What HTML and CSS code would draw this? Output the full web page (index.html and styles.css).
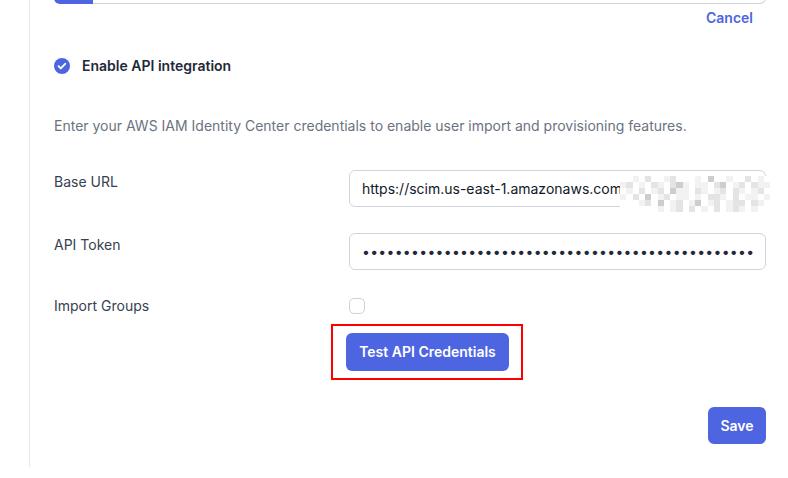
FILE: index.html
```html
<!DOCTYPE html>
<html lang="en">
<head>
<meta charset="utf-8">
<title>AWS IAM Identity Center</title>
<link rel="stylesheet" href="styles.css">
</head>
<body>
<div class="panel">
  <div class="top-group"><span class="addon"></span><span class="top-input"></span></div>
  <div class="cancel-row"><a class="cancel" href="#">Cancel</a></div>
  <div class="enable">
    <span class="check-on"><svg width="16" height="16" viewBox="0 0 16 16"><circle cx="8" cy="8" r="8" fill="#4e65e1"/><path d="M4.6 8.2l2.2 2.2 4.4-4.6" fill="none" stroke="#fff" stroke-width="1.9" stroke-linecap="round" stroke-linejoin="round"/></svg></span>
    <span class="enable-text">Enable API integration</span>
  </div>
  <p class="desc">Enter your AWS IAM Identity Center credentials to enable user import and provisioning features.</p>
  <div class="form-grid">
    <label class="lbl">Base URL</label>
    <div class="field">
      <input class="text-input" type="text" value="https://scim.us-east-1.amazonaws.com">
      <div class="mosaic">
        <i class="m0"></i><i class="m0"></i><i class="m1"></i><i class="m0"></i><i class="m2"></i><i class="m0"></i><i class="m0"></i><i class="m1"></i><i class="m2"></i><i class="m0"></i><i class="m0"></i><i class="m0"></i><i class="m1"></i><i class="m0"></i><i class="m3"></i><i class="m0"></i><i class="m0"></i><i class="m1"></i><i class="m0"></i><i class="m0"></i><i class="m2"></i><i class="m0"></i><i class="m1"></i><i class="m0"></i>
        <i class="m1"></i><i class="m2"></i><i class="m0"></i><i class="m1"></i><i class="m0"></i><i class="m2"></i><i class="m1"></i><i class="m0"></i><i class="m2"></i><i class="m3"></i><i class="m1"></i><i class="m0"></i><i class="m1"></i><i class="m1"></i><i class="m0"></i><i class="m2"></i><i class="m3"></i><i class="m0"></i><i class="m1"></i><i class="m2"></i><i class="m0"></i><i class="m2"></i><i class="m1"></i><i class="m1"></i>
        <i class="m0"></i><i class="m1"></i><i class="m0"></i><i class="m2"></i><i class="m0"></i><i class="m1"></i><i class="m2"></i><i class="m0"></i><i class="m3"></i><i class="m1"></i><i class="m1"></i><i class="m0"></i><i class="m2"></i><i class="m1"></i><i class="m0"></i><i class="m1"></i><i class="m2"></i><i class="m0"></i><i class="m2"></i><i class="m1"></i><i class="m0"></i><i class="m1"></i><i class="m2"></i><i class="m0"></i>
        <i class="m1"></i><i class="m0"></i><i class="m2"></i><i class="m0"></i><i class="m3"></i><i class="m0"></i><i class="m1"></i><i class="m2"></i><i class="m0"></i><i class="m1"></i><i class="m1"></i><i class="m0"></i><i class="m1"></i><i class="m0"></i><i class="m2"></i><i class="m2"></i><i class="m1"></i><i class="m0"></i><i class="m2"></i><i class="m0"></i><i class="m1"></i><i class="m1"></i><i class="m0"></i><i class="m1"></i>
        <i class="m0"></i><i class="m0"></i><i class="m0"></i><i class="m1"></i><i class="m2"></i><i class="m0"></i><i class="m3"></i><i class="m0"></i><i class="m1"></i><i class="m2"></i><i class="m0"></i><i class="m1"></i><i class="m3"></i><i class="m0"></i><i class="m1"></i><i class="m2"></i><i class="m0"></i><i class="m1"></i><i class="m2"></i><i class="m2"></i><i class="m0"></i><i class="m2"></i><i class="m1"></i><i class="m0"></i>
        <i class="m0"></i><i class="m0"></i><i class="m0"></i><i class="m0"></i><i class="m0"></i><i class="m0"></i><i class="m1"></i><i class="m0"></i><i class="m1"></i><i class="m2"></i><i class="m0"></i><i class="m2"></i><i class="m0"></i><i class="m1"></i><i class="m0"></i><i class="m2"></i><i class="m0"></i><i class="m1"></i><i class="m2"></i><i class="m1"></i><i class="m0"></i><i class="m1"></i><i class="m0"></i><i class="m0"></i>
      </div>
    </div>
    <label class="lbl">API Token</label>
    <div class="field">
      <input class="text-input pw" type="password" value="abcdefghijklmnopqrstuvwxyzabcdefghijklmnopqrstuv">
    </div>
    <label class="lbl lbl-check">Import Groups</label>
    <div class="field check-field"><span class="check-off"></span></div>
  </div>
  <div class="test-row">
    <span class="highlight"><button class="btn btn-test" type="button">Test API Credentials</button></span>
  </div>
  <div class="save-row"><button class="btn btn-save" type="button">Save</button></div>
</div>
</body>
</html>
```
FILE: styles.css
```css
* { box-sizing: border-box; }
html, body { margin: 0; padding: 0; background: #fff; }
body {
  font-family: Inter, "Noto Sans", "Liberation Sans", sans-serif;
  font-size: 14px;
  line-height: 20px;
  color: #374151;
  overflow: hidden;
  height: 478px;
}
.panel {
  margin-left: 29px;
  border-left: 1px solid #e5e7eb;
  padding: 0 22px 23px 24px;
}
.top-group {
  display: flex;
  height: 37px;
  margin-top: -33px;
}
.addon {
  width: 39px;
  background: #4e65e1;
  border-radius: 6px 0 0 6px;
}
.top-input {
  flex: 1;
  border: 1px solid #d1d5db;
  border-left: none;
  border-radius: 0 6px 6px 0;
}
.cancel-row {
  display: flex;
  justify-content: flex-end;
  padding-right: 13px;
  margin-top: 4px;
}
.cancel {
  color: #4e65e1;
  font-weight: 600;
  text-decoration: none;
}
.enable {
  display: flex;
  align-items: center;
  gap: 12px;
  margin-top: 28px;
  height: 20px;
}
.check-on { display: flex; width: 16px; height: 16px; }
.enable-text { font-weight: 600; color: #1f2937; }
.desc {
  margin: 40px 0 0;
  color: #6b7280;
}
.form-grid {
  display: grid;
  grid-template-columns: 295px 1fr;
  row-gap: 26px;
  margin-top: 34px;
}
.lbl { padding-top: 2px; color: #374151; }
.lbl-check { padding-top: 0; }
.field { position: relative; }
.text-input {
  display: block;
  width: 100%;
  height: 37px;
  border: 1px solid #d1d5db;
  border-radius: 6px;
  padding: 0 12px;
  font-family: inherit;
  font-size: 14px;
  color: #111827;
  background: #fff;
  outline: none;
}
.pw { letter-spacing: 0.3px; color: #1f2937; }
.mosaic {
  position: absolute;
  left: 271px;
  top: 6px;
  width: 150px;
  height: 36px;
  display: grid;
  grid-template-columns: repeat(24, 1fr);
  grid-template-rows: repeat(6, 6px);
}
.mosaic i { display: block; }
.m0 { background: #fff; }
.m1 { background: #f2f2f2; }
.m2 { background: #e4e4e4; }
.m3 { background: #cdcdcd; }
.check-field { height: 20px; display: flex; align-items: center; }
.check-off {
  width: 16px;
  height: 16px;
  border: 1.5px solid #cfd2d8;
  border-radius: 5px;
}
.test-row {
  margin-top: 8px;
  padding-left: 277px;
  display: flex;
}
.highlight {
  display: flex;
  border: 2px solid #ff0000;
  padding: 7px 12px 7px 13px;
}
.btn {
  border: none;
  border-radius: 6px;
  background: #4e65e1;
  color: #fff;
  font-family: inherit;
  font-size: 14px;
  font-weight: 600;
  line-height: 20px;
  cursor: pointer;
}
.btn-test { width: 163px; height: 38px; padding: 0; }
.save-row {
  display: flex;
  justify-content: flex-end;
  margin-top: 27px;
}
.btn-save { width: 58px; height: 37px; padding: 0; }
```
